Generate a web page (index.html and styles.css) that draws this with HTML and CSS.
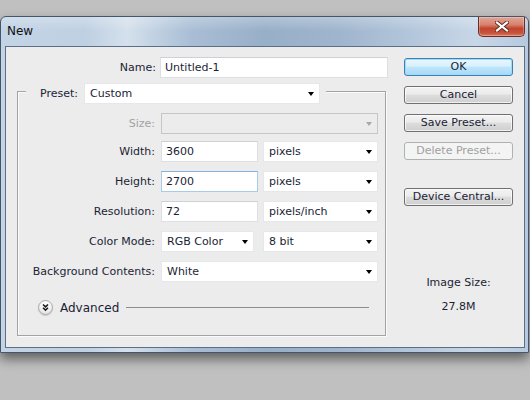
FILE: index.html
```html
<!DOCTYPE html>
<html>
<head>
<meta charset="utf-8">
<link rel="stylesheet" href="styles.css">
</head>
<body>
<div class="window">
  <div class="titlebar">
    <span class="title">New</span>
    <div class="close">
      <svg width="14" height="11" viewBox="0 0 14 11">
        <path d="M2 1.5 L12 9.5 M12 1.5 L2 9.5" stroke="#5a2a22" stroke-width="4" stroke-linecap="square" fill="none"/>
        <path d="M2 1.5 L12 9.5 M12 1.5 L2 9.5" stroke="#ffffff" stroke-width="2.2" stroke-linecap="square" fill="none"/>
      </svg>
    </div>
  </div>
  <div class="client">
    <div class="left">
      <div class="name-row">
        <span class="name-lbl">Name:</span>
        <div class="field name-field">Untitled-1</div>
      </div>
      <div class="group">
        <div class="group-head">
          <span class="preset-lbl">Preset:</span>
          <div class="select preset">Custom<span class="arrow"></span></div>
        </div>
        <div class="rows">
          <div class="row size-row">
            <span class="lbl dim">Size:</span>
            <div class="select wide disabled"><span class="arrow"></span></div>
          </div>
          <div class="row">
            <span class="lbl">Width:</span>
            <div class="field num">3600</div>
            <div class="select unit">pixels<span class="arrow"></span></div>
          </div>
          <div class="row">
            <span class="lbl">Height:</span>
            <div class="field num focus">2700</div>
            <div class="select unit">pixels<span class="arrow"></span></div>
          </div>
          <div class="row">
            <span class="lbl">Resolution:</span>
            <div class="field num">72</div>
            <div class="select unit">pixels/inch<span class="arrow"></span></div>
          </div>
          <div class="row">
            <span class="lbl">Color Mode:</span>
            <div class="select rgb">RGB Color<span class="arrow"></span></div>
            <div class="select unit">8 bit<span class="arrow"></span></div>
          </div>
          <div class="row">
            <span class="lbl">Background Contents:</span>
            <div class="select wide">White<span class="arrow"></span></div>
          </div>
        </div>
        <div class="advanced">
          <span class="adv-icon">
            <svg width="14" height="14" viewBox="0 0 14 14">
              <path d="M4.3 3.8 L7 6.3 L9.7 3.8 M4.3 7.3 L7 9.8 L9.7 7.3" stroke="#1a1a1a" stroke-width="1.7" fill="none"/>
            </svg>
          </span>
          <span class="adv-text">Advanced</span>
          <span class="adv-line"></span>
        </div>
      </div>
    </div>
    <div class="right">
      <div class="btn default">OK</div>
      <div class="btn">Cancel</div>
      <div class="btn">Save Preset...</div>
      <div class="btn disabled">Delete Preset...</div>
      <div class="btn device">Device Central...</div>
      <div class="imgsize">
        <span>Image Size:</span>
        <span>27.8M</span>
      </div>
    </div>
  </div>
</div>
</body>
</html>
```

FILE: styles.css
```css
html, body {
  margin: 0;
  padding: 0;
}
body {
  background: #c0c0c0;
  width: 530px;
  height: 400px;
  overflow: hidden;
  font-family: "DejaVu Sans", "Liberation Sans", sans-serif;
  font-size: 11px;
  color: #1b1e35;
}
.window {
  margin-top: 16px;
  width: 529px;
  box-sizing: border-box;
  border: 1px solid #46566a;
  border-radius: 6px 6px 0 0;
  padding: 0 3px 4px 4px;
  background:
    linear-gradient(180deg, rgba(255,255,255,0.25) 0px, rgba(255,255,255,0) 14px),
    linear-gradient(90deg, #c3d4e6 0%, #bfd0e2 16%, #d4e0ec 24%, #a9bed5 36%, #98afc8 50%, #9fb5cd 64%, #b3c6db 78%, #c8d7e7 90%, #b6c9de 100%);
  box-shadow: 0 6px 12px rgba(0,0,0,0.5);
}
.titlebar {
  height: 29px;
  display: flex;
  justify-content: space-between;
  align-items: flex-start;
}
.title {
  padding-left: 2px;
  line-height: 28px;
  font-size: 12px;
  color: #111;
}
.close {
  width: 47px;
  height: 20px;
  box-sizing: border-box;
  border: 1px solid #6e2c22;
  border-top: none;
  border-radius: 0 0 5px 5px;
  background: linear-gradient(180deg, #e3a596 0%, #d7826f 40%, #c2452e 60%, #c9533a 85%, #d9806a 100%);
  display: flex;
  align-items: center;
  justify-content: center;
  box-shadow: inset 0 0 0 1px rgba(255,255,255,0.25);
}
.client {
  height: 302px;
  box-sizing: border-box;
  border: 1px solid #5d6f86;
  background: #ececec;
  display: flex;
}
.left {
  width: 382px;
  display: flex;
  flex-direction: column;
}
.name-row {
  display: flex;
  align-items: center;
  margin-top: 10px;
}
.name-lbl {
  width: 150px;
  text-align: right;
  margin-right: 4px;
}
.field {
  height: 21px;
  box-sizing: border-box;
  background: #fff;
  border: 1px solid #dcdfe4;
  border-top-color: #cdd1d7;
  padding-left: 4px;
  line-height: 19px;
  white-space: nowrap;
}
.name-field {
  width: 228px;
}
.group {
  margin-top: 13px;
  margin-left: 11px;
  width: 369px;
  box-sizing: border-box;
  border: 1px solid #a3a3a3;
  box-shadow: inset 1px 1px 0 #fbfbfb, 1px 1px 0 #fbfbfb;
  display: flex;
  flex-direction: column;
  padding-bottom: 20px;
}
.group-head {
  align-self: flex-start;
  display: flex;
  align-items: center;
  margin-top: -9px;
  margin-left: 8px;
  padding: 0 6px 0 14px;
  background: #ececec;
}
.preset-lbl {
  width: 44px;
}
.select {
  position: relative;
  height: 21px;
  box-sizing: border-box;
  background: #fff;
  border: 1px solid #e6e7ea;
  padding-left: 5px;
  line-height: 19px;
  white-space: nowrap;
}
.arrow {
  position: absolute;
  right: 5px;
  top: 8px;
  width: 0;
  height: 0;
  border-left: 3.5px solid transparent;
  border-right: 3.5px solid transparent;
  border-top: 4px solid #000;
}
.preset {
  width: 236px;
}
.rows {
  display: flex;
  flex-direction: column;
  gap: 9px;
  margin-top: 9px;
}
.row {
  display: flex;
  align-items: center;
  gap: 5px;
}
.size-row {
  margin-bottom: -2px;
}
.lbl {
  width: 137px;
  text-align: right;
  margin-right: 1px;
}
.lbl.dim {
  color: #a2a2a2;
}
.num {
  width: 97px;
}
.focus {
  border-color: #a9cbea;
  border-top-color: #84b2dc;
}
.unit {
  width: 115px;
}
.wide {
  width: 217px;
}
.rgb {
  width: 93px;
  margin-right: 4px;
}
.select.disabled {
  background: #ececec;
  border-color: #c6c6c6;
}
.select.disabled .arrow {
  border-top-color: #a8a8a8;
}
.advanced {
  display: flex;
  align-items: center;
  margin-top: 18px;
  margin-left: 20px;
  height: 15px;
}
.adv-icon {
  width: 15px;
  height: 15px;
  box-sizing: border-box;
  border-radius: 50%;
  border: 1px solid #a9a9a9;
  background: radial-gradient(circle at 50% 30%, #ffffff 0%, #f6f6f6 45%, #d2d2d2 100%);
  box-shadow: 0 1px 1px rgba(0,0,0,0.15);
  display: flex;
  align-items: center;
  justify-content: center;
}
.adv-icon svg {
  width: 13px;
  height: 13px;
}
.adv-text {
  margin-left: 7px;
  font-size: 12px;
}
.adv-line {
  flex: 0 0 243px;
  height: 1px;
  margin-left: 7px;
  margin-top: -1px;
  background: #8d8d8d;
}
.right {
  width: 109px;
  margin-left: 16px;
  margin-top: 11px;
  display: flex;
  flex-direction: column;
  gap: 10px;
}
.btn {
  height: 18px;
  box-sizing: border-box;
  border: 1px solid #707070;
  border-radius: 3px;
  background: linear-gradient(180deg, #f3f3f3 0%, #ebebeb 45%, #dddddd 50%, #cfcfcf 100%);
  box-shadow: inset 0 0 0 1px rgba(255,255,255,0.7);
  text-align: center;
  line-height: 16px;
  color: #1b1e35;
}
.btn.default {
  border-color: #3c7fb1;
  background: linear-gradient(180deg, #eaf6fd 0%, #d9f0fc 45%, #bee6fd 50%, #a7d9f5 100%);
  box-shadow: inset 0 0 0 1px #9fdcfa;
}
.btn.disabled {
  border-color: #adb2b5;
  background: #f4f4f4;
  box-shadow: none;
  color: #a0a0a0;
}
.btn.device {
  margin-top: 18px;
}
.imgsize {
  margin-top: 60px;
  display: flex;
  flex-direction: column;
  align-items: center;
  gap: 11px;
}
```
